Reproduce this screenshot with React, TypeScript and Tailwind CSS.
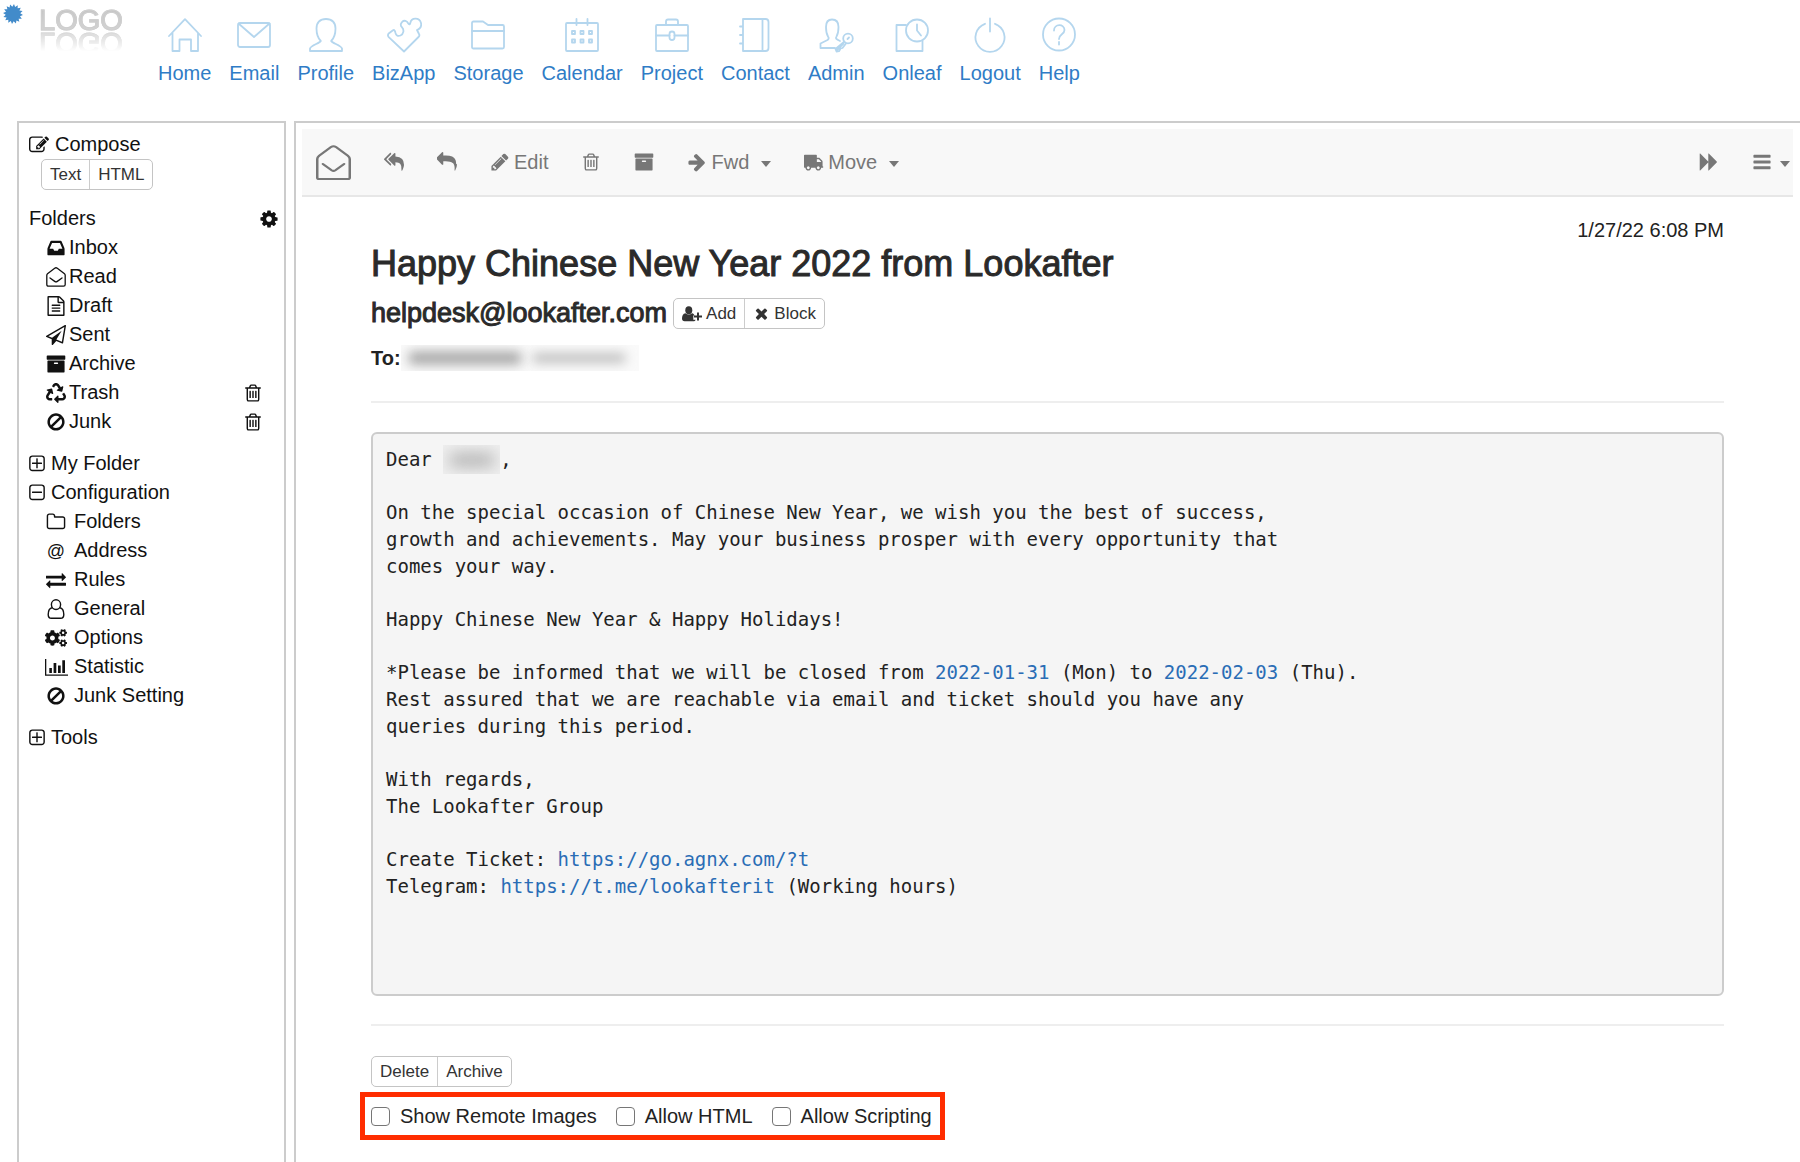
import React from "react";
import { FaCogs, FaRecycle } from "react-icons/fa";

/* ---------- Solid glyphs drawn on a 1792 grid ---------- */

const GLYPHS = {
  archive:
    "M1088 832q0-26-19-45t-45-19h-256q-26 0-45 19t-19 45 19 45 45 19h256q26 0 45-19t19-45zm576-192v960q0 26-19 45t-45 19h-1408q-26 0-45-19t-19-45v-960q0-26 19-45t45-19h1408q26 0 45 19t19 45zm64-448v256q0 26-19 45t-45 19h-1536q-26 0-45-19t-19-45v-256q0-26 19-45t45-19h1536q26 0 45 19t19 45z",
  reply:
    "M1792 1120q0 166-127 451-3 7-10.5 24t-13.5 30-13 22q-12 17-28 17-15 0-23.5-10t-8.5-25q0-9 2.5-26.5t2.5-23.5q5-68 5-123 0-112-19.5-200.5t-54-153.5-89-112-118.5-76.5-147-48.5-170.5-25-193.5-7h-224v256q0 26-19 45t-45 19-45-19l-512-512q-19-19-19-45t19-45l512-512q19-19 45-19t45 19 19 45v256h224q713 0 875 403 53 134 53 333z",
  replyAll:
    "M640 1082v70q0 42-39 59-13 5-25 5-27 0-45-19l-512-512q-19-19-19-45t19-45l512-512q29-31 70-14 39 17 39 59v69l-397 398q-19 19-19 45t19 45zm1152 58q0 58-17 133.5t-38.5 138-48 125-40.5 90.5l-20 40q-8 17-28 17-6 0-9-1-25-8-23-34 43-400-106-565-64-71-170.5-110.5t-267.5-52.5v251q0 42-39 59-13 5-25 5-27 0-45-19l-512-512q-19-19-19-45t19-45l512-512q29-31 70-14 39 17 39 59v262q411 28 599 221 169 173 169 509z",
  cog: "M1152 896q0-106-75-181t-181-75-181 75-75 181 75 181 181 75 181-75 75-181zm512-109v222q0 12-8 23t-20 13l-185 28q-19 54-39 91 35 50 107 138 10 12 10 25t-9 23q-27 37-99 108t-94 71q-12 0-26-9l-138-108q-44 23-91 38-16 136-29 186-7 28-36 28h-222q-14 0-24.5-8.5t-11.5-21.5l-28-184q-49-16-90-37l-141 107q-10 9-25 9-14 0-25-11-126-114-165-168-7-10-7-23 0-12 8-23 15-21 51-66.5t54-70.5q-27-50-41-99l-183-27q-13-2-21-12.5t-8-23.5v-222q0-12 8-23t19-13l186-28q14-46 39-92-40-57-107-138-10-12-10-24 0-10 9-23 26-36 98.5-107.5t94.5-71.5q13 0 26 10l138 107q44-23 91-38 16-136 29-186 7-28 36-28h222q14 0 24.5 8.5t11.5 21.5l28 184q49 16 90 37l142-107q9-9 24-9 13 0 25 10 129 119 165 170 7 8 7 22 0 12-8 23-15 21-51 66.5t-54 70.5q26 50 41 98l183 28q13 2 21 12.5t8 23.5z",
  pencil:
    "M491 1536l91-91-235-235-91 91v107h128v128h107zm523-928q0-22-22-22-10 0-17 7l-542 542q-7 7-7 17 0 22 22 22 10 0 17-7l542-542q7-7 7-17zm-54-192l416 416-832 832h-416v-416zm683 96q0 53-37 90l-166 166-416-416 166-165q36-38 90-38 53 0 91 38l235 234q37 39 37 91z",
  compose:
    "M888 1184l116-116-152-152-116 116v56h96v96h56zm440-720q-16-16-33 1l-350 350q-17 17-1 33t33-1l350-350q17-17 1-33zm80 594v190q0 119-84.5 203.5t-203.5 84.5h-832q-119 0-203.5-84.5t-84.5-203.5v-832q0-119 84.5-203.5t203.5-84.5h832q63 0 117 25 15 7 18 23 3 17-9 29l-49 49q-14 14-32 8-23-6-45-6h-832q-66 0-113 47t-47 113v832q0 66 47 113t113 47h832q66 0 113-47t47-113v-126q0-13 9-22l64-64q15-15 35-7t20 29zm-96-738l288 288-672 672h-288v-288zm444 132l-92 92-288-288 92-92q28-28 68-28t68 28l152 152q28 28 28 68t-28 68z",
  trash:
    "M704 736v576q0 14-9 23t-23 9h-64q-14 0-23-9t-9-23v-576q0-14 9-23t23-9h64q14 0 23 9t9 23zm256 0v576q0 14-9 23t-23 9h-64q-14 0-23-9t-9-23v-576q0-14 9-23t23-9h64q14 0 23 9t9 23zm256 0v576q0 14-9 23t-23 9h-64q-14 0-23-9t-9-23v-576q0-14 9-23t23-9h64q14 0 23 9t9 23zm128 724v-948h-896v948q0 22 7 40.5t14.5 27 10.5 8.5h832q3 0 10.5-8.5t14.5-27 7-40.5zm-672-1076h448l-48-117q-7-9-17-11h-317q-10 2-17 11zm928 32v64q0 14-9 23t-23 9h-96v948q0 83-47 143.5t-113 60.5h-832q-66 0-113-58.5t-47-141.5v-952h-96q-14 0-23-9t-9-23v-64q0-14 9-23t23-9h309l70-167q15-37 54-63t79-26h320q40 0 79 26t54 63l70 167h309q14 0 23 9t9 23z",
  plusSquare:
    "M1344 800v64q0 14-9 23t-23 9h-352v352q0 14-9 23t-23 9h-64q-14 0-23-9t-9-23v-352h-352q-14 0-23-9t-9-23v-64q0-14 9-23t23-9h352v-352q0-14 9-23t23-9h64q14 0 23 9t9 23v352h352q14 0 23 9t9 23zm128 448v-832q0-66-47-113t-113-47h-832q-66 0-113 47t-47 113v832q0 66 47 113t113 47h832q66 0 113-47t47-113zm128-832v832q0 119-84.5 203.5t-203.5 84.5h-832q-119 0-203.5-84.5t-84.5-203.5v-832q0-119 84.5-203.5t203.5-84.5h832q119 0 203.5 84.5t84.5 203.5z",
  minusSquare:
    "M1344 800v64q0 14-9 23t-23 9h-832q-14 0-23-9t-9-23v-64q0-14 9-23t23-9h832q14 0 23 9t9 23zm128 448v-832q0-66-47-113t-113-47h-832q-66 0-113 47t-47 113v832q0 66 47 113t113 47h832q66 0 113-47t47-113zm128-832v832q0 119-84.5 203.5t-203.5 84.5h-832q-119 0-203.5-84.5t-84.5-203.5v-832q0-119 84.5-203.5t203.5-84.5h832q119 0 203.5 84.5t84.5 203.5z",
  ban: "M1440 893q0-161-87-295l-754 753q137 89 297 89 111 0 211.5-43.5t173.5-116.5 116-174.5 43-212.5zm-999 299l755-754q-135-91-300-91-148 0-273 73t-198 199-73 274q0 162 89 299zm1223-299q0 157-61 300t-163.5 246-245 164-298.5 61-298.5-61-245-164-163.5-246-61-300 61-299.5 163.5-245.5 245-164 298.5-61 298.5 61 245 164 163.5 245.5 61 299.5z",
  folder:
    "M1600 1312v-704q0-40-28-68t-68-28h-704q-40 0-68-28t-28-68v-64q0-40-28-68t-68-28h-320q-40 0-68 28t-28 68v960q0 40 28 68t68 28h1216q40 0 68-28t28-68zm128-704v704q0 92-66 158t-158 66h-1216q-92 0-158-66t-66-158v-960q0-92 66-158t158-66h320q92 0 158 66t66 158v32h672q92 0 158 66t66 158z",
  plane:
    "M1764 11q33 24 27 64l-256 1536q-5 29-32 45-14 8-31 8-11 0-24-5l-527-215-298 327q-18 21-47 21-14 0-23-4-19-7-30-23.5t-11-36.5v-452l-472-193q-37-14-40-55-3-39 32-59l1664-960q35-21 68 2zm-342 1499l221-1323-1434 827 336 137 863-639-478 797z",
  inbox:
    "M1151 960h316q-1-3-2.5-8.5t-2.5-8.5l-212-496h-708l-212 496q-1 3-2.5 8.5t-2.5 8.5h316l95 192h320zm513 30v482q0 26-19 45t-45 19h-1408q-26 0-45-19t-19-45v-482q0-62 25-123l238-552q10-25 36.5-42t52.5-17h832q26 0 52.5 17t36.5 42l238 552q25 61 25 123z",
  draft:
    "M1596 380q28 28 48 76t20 88v1152q0 40-28 68t-68 28h-1344q-40 0-68-28t-28-68v-1600q0-40 28-68t68-28h896q40 0 88 20t76 48zm-444-244v376h376q-10-29-22-41l-313-313q-12-12-41-22zm384 1528v-1024h-416q-40 0-68-28t-28-68v-416h-768v1536h1280zm-1024-864q0-14 9-23t23-9h704q14 0 23 9t9 23v64q0 14-9 23t-23 9h-704q-14 0-23-9t-9-23v-64zm736 224q14 0 23 9t9 23v64q0 14-9 23t-23 9h-704q-14 0-23-9t-9-23v-64q0-14 9-23t23-9h704zm0 256q14 0 23 9t9 23v64q0 14-9 23t-23 9h-704q-14 0-23-9t-9-23v-64q0-14 9-23t23-9h704z",
  exchange:
    "M1792 1184v192q0 13-9.5 22.5t-22.5 9.5h-1376v192q0 13-9.5 22.5t-22.5 9.5q-12 0-24-10l-319-320q-9-9-9-22 0-14 9-23l320-320q9-9 23-9 13 0 22.5 9.5t9.5 22.5v192h1376q13 0 22.5 9.5t9.5 22.5zm0-544q0 14-9 23l-320 320q-9 9-23 9-13 0-22.5-9.5t-9.5-22.5v-192h-1376q-13 0-22.5-9.5t-9.5-22.5v-192q0-13 9.5-22.5t22.5-9.5h1376v-192q0-14 9-23t23-9q12 0 24 10l319 319q9 9 9 23z",
  arrowRight:
    "M1600 960q0 54-37 91l-651 651q-39 37-91 37-51 0-90-37l-75-75q-38-38-38-91t38-91l293-293h-704q-52 0-84.5-37.5t-32.5-90.5v-128q0-53 32.5-90.5t84.5-37.5h704l-293-294q-38-36-38-90t38-90l75-75q38-38 90-38 53 0 91 38l651 651q37 35 37 90z",
  times:
    "M1490 1322q0 40-28 68l-136 136q-28 28-68 28t-68-28l-294-294-294 294q-28 28-68 28t-68-28l-136-136q-28-28-28-68t28-68l294-294-294-294q-28-28-28-68t28-68l136-136q28-28 68-28t68 28l294 294 294-294q28-28 68-28t68 28l136 136q28 28 28 68t-28 68l-294 294 294 294q28 28 28 68z",
  truck:
    "M640 1408q0-52-38-90t-90-38-90 38-38 90 38 90 90 38 90-38 38-90zm-384-512h384v-256h-158q-13 0-22 9l-195 195q-9 9-9 22v30zm1280 512q0-52-38-90t-90-38-90 38-38 90 38 90 90 38 90-38 38-90zm256-1088v1024q0 15-4 26.5t-13.5 18.5-16.5 11.5-23.5 6-22.5 2-25.5 0-22.5-.5q0 106-75 181t-181 75-181-75-75-181h-384q0 106-75 181t-181 75-181-75-75-181h-64q-3 0-22.5.5t-25.5 0-22.5-2-23.5-6-16.5-11.5-13.5-18.5-4-26.5q0-26 19-45t45-19v-320q0-8-.5-35t0-38 2.5-34.5 6.5-37 14-30.5 22.5-30l198-198q19-19 50.5-32t58.5-13h160v-192q0-26 19-45t45-19h1024q26 0 45 19t19 45z",
  forward:
    "M109 1651q-19 19-32 13t-13-32v-1472q0-26 13-32t32 13l710 710q8 8 13 19v-710q0-26 13-32t32 13l710 710q19 19 19 45t-19 45l-710 710q-19 19-32 13t-13-32v-710q-5 11-13 19z",
  bars: "M1664 1344v128q0 26-19 45t-45 19h-1408q-26 0-45-19t-19-45v-128q0-26 19-45t45-19h1408q26 0 45 19t19 45zm0-512v128q0 26-19 45t-45 19h-1408q-26 0-45-19t-19-45v-128q0-26 19-45t45-19h1408q26 0 45 19t19 45zm0-512v128q0 26-19 45t-45 19h-1408q-26 0-45-19t-19-45v-128q0-26 19-45t45-19h1408q26 0 45 19t19 45z",
} as const;

type GlyphName = keyof typeof GLYPHS;

function Glyph({ name, className = "size-5" }: { name: GlyphName; className?: string }) {
  return (
    <svg viewBox="0 0 1792 1792" className={className} fill="currentColor" aria-hidden="true">
      <path d={GLYPHS[name]} />
    </svg>
  );
}

function Caret() {
  return (
    <svg viewBox="0 0 10 6" className="mt-1 h-[6px] w-[10px]" fill="currentColor" aria-hidden="true">
      <path d="M0 0h10L5 6z" />
    </svg>
  );
}

function OpenEnvelope({ className }: { className: string }) {
  return (
    <svg viewBox="0 0 28 34" className={className} fill="none" stroke="currentColor" strokeWidth="2" strokeLinejoin="round" aria-hidden="true" preserveAspectRatio="none">
      <path d="M1 13.500C1 12 1.500 11.500 2.500 10.500L12 2q2-1.600 4 0l9.500 8.500c1 1 1.500 1.500 1.500 3V31.500q0 1.500-1.500 1.500h-23Q1 33 1 31.500z" />
      <path d="M5.500 18.500l7 6q1.500 1.200 3 0l7-6" strokeLinecap="round" />
    </svg>
  );
}

function ReadIcon() {
  return (
    <svg viewBox="0 0 20 20" className="size-5" fill="none" stroke="currentColor" strokeWidth="1.300" strokeLinejoin="round" aria-hidden="true">
      <path d="M.8 8.200q0-.9.700-1.500L8.700 1.200q1.300-.9 2.600 0l7.200 5.500q.7.600.7 1.500v9.300q0 1.600-1.600 1.600H2.400Q.8 19.100.8 17.500z" />
      <path d="M4 11l4.700 3.400q1.300.9 2.600 0L16 11" strokeLinecap="round" />
    </svg>
  );
}

function UserOutline() {
  return (
    <svg viewBox="0 0 20 20" className="size-5" fill="none" stroke="currentColor" strokeWidth="1.400" aria-hidden="true">
      <ellipse cx="10" cy="5.600" rx="4.600" ry="4.900" />
      <path d="M6.300 8.800C3.600 9.300 2.200 12 2.200 15.500c0 2.400 1.300 3.800 3.200 3.800h9.200c1.900 0 3.200-1.400 3.200-3.800 0-3.500-1.400-6.200-4.100-6.700" />
    </svg>
  );
}

function BarChart() {
  return (
    <svg viewBox="0 0 23 18" className="h-[18px] w-[23px]" fill="currentColor" aria-hidden="true">
      <path d="M0 1h1.300v15.400H23V17.700H0zM4.300 10h2.600v5H4.300zM8.600 5h2.700v10H8.600zM13 7.500h2.700V15H13zM17.300 2.300H20V15h-2.700z" />
    </svg>
  );
}

function UserPlus() {
  return (
    <svg viewBox="0 0 20 16" className="h-4 w-5" fill="currentColor" aria-hidden="true">
      <ellipse cx="6.800" cy="4.300" rx="3.500" ry="4" />
      <path d="M3.500 7.200C1 7.600 0 9.800 0 12.600 0 14.400 1 15.300 2.600 15.300h8.600c1.200 0 2.100-.5 2.400-1.500h-2.300V9.600h1.300c-.5-1.400-1.300-2.200-2.500-2.400-2 1.800-4.600 1.800-6.600 0z" />
      <path d="M15 6.500h2v3h3v2h-3v3h-2v-3h-3v-2h3z" />
    </svg>
  );
}

function Burst() {
  const spikes = 16;
  const points = Array.from({ length: spikes * 2 }, (_, i) => {
    const r = i % 2 === 0 ? 10 : 7.3;
    const a = (Math.PI * i) / spikes + 0.1;
    return `${(10 + r * Math.cos(a)).toFixed(2)},${(10 + r * Math.sin(a)).toFixed(2)}`;
  }).join(" ");
  return (
    <svg viewBox="0 0 20 20" className="size-5 text-[#428bca]" fill="currentColor" aria-hidden="true">
      <polygon points={points} />
    </svg>
  );
}

/* ---------- Top navigation ---------- */

const NAV: { label: string; art: React.ReactNode }[] = [
  {
    label: "Home",
    art: <path d="M2 19 18 2.200 34 19M5.500 16v18h7V22.500h11.500V34h7V16" />,
  },
  {
    label: "Email",
    art: (
      <>
        <rect x="2" y="6" width="32" height="24" rx="2" />
        <path d="M2.500 6.500 18 20 33.500 6.500" />
      </>
    ),
  },
  {
    label: "Profile",
    art: (
      <path d="M18 2c-6 0-9.500 3.500-9.500 9.500 0 5 1.300 9.500 4.300 12.500-1.300 2.500-9.800 4-10.800 7.500V34h32v-2.500c-1-3.500-9.500-5-10.800-7.500 3-3 4.300-7.500 4.300-12.500C27.500 5.500 24 2 18 2z" />
    ),
  },
  {
    label: "BizApp",
    art: (
      <path d="M7 13.200 3 16.200q-1.800 1.800-.5 3.600L18 34.500 32.500 20q1.500-1.500.5-3L31 13q5-2 4-7c-1.500-5.500-9.500-6-10.700 0-.3 1.500-1 1.800-1.800.8-1.500-3.300-4.500-3.800-6.300-2s-2 4-.2 5.500c2.500 2.500 1.500 7-1.500 8.200-3 1.200-4.500-.5-5-2.500-.3-1.500-1-3.600-2.500-2.800z" />
    ),
  },
  {
    label: "Storage",
    art: (
      <>
        <path d="M2 30V6q0-1.500 1.500-1.500H13l5 3.500h14.500Q34 8 34 9.500V30q0 1.500-1.500 1.500h-29Q2 31.500 2 30z" />
        <path d="M2 14h32" />
      </>
    ),
  },
  {
    label: "Calendar",
    art: (
      <>
        <rect x="2" y="6" width="32" height="28" rx="1" />
        <path d="M12.500 2v6M23.500 2v6" />
        <path d="M8 14h3v3H8zM16.500 14h3v3h-3zM25 14h3v3h-3zM8 22.500h3v3H8zM16.500 22.500h3v3h-3zM25 22.500h3v3h-3z" />
      </>
    ),
  },
  {
    label: "Project",
    art: (
      <>
        <rect x="2" y="8" width="32" height="26" rx="1" />
        <path d="M12 8V4.500Q12 2.500 14 2.500h8q2 0 2 2V8M2 18.500h13.500M20.500 18.500H34" />
        <rect x="15.500" y="14.500" width="5" height="8.500" rx="2.500" />
      </>
    ),
  },
  {
    label: "Contact",
    art: <path d="M6 2h22.500q3 0 3 3v26q0 3-3 3H6zM25.500 2v32M3 9.500h3M3 18h3M3 26.500h3" />,
  },
  {
    label: "Admin",
    art: (
      <>
        <path d="M17 31H2.500v-4.500L9.500 23q2-1.500.5-3.500C8.500 17 8 14 8 10c0-5 2-7.500 6-7.500S20.500 5 20.500 10c0 4-.5 7-2 9.500-1.500 2 0 3 3.500 4.500" />
        <circle cx="30" cy="21.500" r="4.800" />
        <path d="M26.500 24.500 17.500 32l1 2.500 2.500-.3 1.500-2.700 2-.5L28 26.500M29.500 22l1.500-1.500M19.500 32.500l6-6" />
      </>
    ),
  },
  {
    label: "Onleaf",
    art: (
      <>
        <path d="M12 8H2.500v26h26v-10" />
        <circle cx="23" cy="13.500" r="11" />
        <path d="M23 7.500v6l4 5" />
      </>
    ),
  },
  {
    label: "Logout",
    art: <path d="M13 6.800a14.500 14.500 0 1 0 10 0M18 1.500V14.500" />,
  },
  {
    label: "Help",
    art: (
      <>
        <circle cx="18" cy="17.500" r="16" />
        <path d="M13 13.500c0-7 10.500-7 10.500-.5 0 4.500-5.500 4-5.500 9M18 25v2.500" />
      </>
    ),
  },
];

function TopBar() {
  return (
    <header className="flex h-[121px] shrink-0 items-start">
      <div className="flex w-[158px] shrink-0 items-start gap-4 pl-[3px] pt-1">
        <Burst />
        <div className="mt-[2px] bg-linear-to-b from-[#c4c4c4] to-[#d6d6d6] bg-clip-text text-[29px] leading-[29px] text-transparent [-webkit-box-reflect:below_-7px_linear-gradient(transparent_20%,rgba(0,0,0,1))] [-webkit-text-stroke:1px_#cfcfcf]">
          LOGO
        </div>
      </div>
      <nav aria-label="Main" className="flex gap-[18px] pt-[17px]">
        {NAV.map((item) => (
          <a key={item.label} href="#" className="flex flex-col items-center gap-[5px] text-xl leading-[30px] text-[#2f7cc6]">
            <svg
              viewBox="0 0 36 36"
              className="size-9 text-[#b4d6ee]"
              fill="none"
              stroke="currentColor"
              strokeWidth="1.800"
              strokeLinejoin="round"
              strokeLinecap="round"
              aria-hidden="true"
            >
              {item.art}
            </svg>
            {item.label}
          </a>
        ))}
      </nav>
    </header>
  );
}

/* ---------- Shared controls ---------- */

function ButtonGroup({ children }: { children: React.ReactNode }) {
  return <div className="flex w-fit divide-x divide-[#ccc] rounded-[5px] border border-[#c4c4c4] bg-white">{children}</div>;
}

function SmallButton({ children }: { children: React.ReactNode }) {
  return (
    <button type="button" className="flex h-[29px] items-center gap-1 px-2 text-[17px] leading-6 text-[#333]">
      {children}
    </button>
  );
}

/* ---------- Sidebar ---------- */

function FolderRow({ icon, label, wide, trash }: { icon: React.ReactNode; label: string; wide?: boolean; trash?: boolean }) {
  return (
    <li className="flex h-[29px] items-center pl-[14px] pr-4">
      <a href="#" className={wide ? "flex items-center gap-[5px]" : "flex items-center"}>
        <span className="flex w-[26px] justify-center">{icon}</span>
        {label}
      </a>
      {trash && (
        <button type="button" aria-label={`Empty ${label}`} className="ml-auto">
          <Glyph name="trash" />
        </button>
      )}
    </li>
  );
}

function Sidebar() {
  return (
    <aside className="w-[269px] shrink-0 border-x-2 border-t-2 border-[#ccc] pl-[10px] pr-[5px] pt-[7px] text-xl leading-[29px] text-[#111]">
      <a href="#" className="flex h-[29px] items-center gap-[6px]">
        <Glyph name="compose" />
        Compose
      </a>
      <div className="pl-3">
        <ButtonGroup>
          <SmallButton>Text</SmallButton>
          <SmallButton>HTML</SmallButton>
        </ButtonGroup>
      </div>
      <div className="mt-[14px] flex h-[29px] items-center justify-between">
        <h2>Folders</h2>
        <button type="button" aria-label="Folder settings">
          <Glyph name="cog" />
        </button>
      </div>
      <ul>
        <FolderRow icon={<Glyph name="inbox" />} label="Inbox" />
        <FolderRow icon={<ReadIcon />} label="Read" />
        <FolderRow icon={<Glyph name="draft" />} label="Draft" />
        <FolderRow icon={<Glyph name="plane" />} label="Sent" />
        <FolderRow icon={<Glyph name="archive" />} label="Archive" />
        <FolderRow icon={<FaRecycle className="size-5" aria-hidden="true" />} label="Trash" trash />
        <FolderRow icon={<Glyph name="ban" />} label="Junk" trash />
      </ul>
      <a href="#" className="mt-[13px] flex h-[29px] items-center">
        <Glyph name="plusSquare" className="-ml-[2px] mr-1 size-5" />
        My Folder
      </a>
      <a href="#" className="flex h-[29px] items-center">
        <Glyph name="minusSquare" className="-ml-[2px] mr-1 size-5" />
        Configuration
      </a>
      <ul>
        <FolderRow wide icon={<Glyph name="folder" />} label="Folders" />
        <FolderRow wide icon={<span className="text-lg">@</span>} label="Address" />
        <FolderRow wide icon={<Glyph name="exchange" />} label="Rules" />
        <FolderRow wide icon={<UserOutline />} label="General" />
        <FolderRow wide icon={<FaCogs className="h-5 w-[22px]" aria-hidden="true" />} label="Options" />
        <FolderRow wide icon={<BarChart />} label="Statistic" />
        <FolderRow wide icon={<Glyph name="ban" />} label="Junk Setting" />
      </ul>
      <a href="#" className="mt-[13px] flex h-[29px] items-center">
        <Glyph name="plusSquare" className="-ml-[2px] mr-1 size-5" />
        Tools
      </a>
    </aside>
  );
}

/* ---------- Message pane ---------- */

function Toolbar() {
  return (
    <div className="flex h-[68px] items-center border-b-2 border-[#e7e7e7] bg-[#f8f8f8] pl-[14px] pr-[3px] text-xl leading-7 text-[#777]">
      <div className="flex items-center gap-[33px]">
        <button type="button" aria-label="Mark as read">
          <OpenEnvelope className="h-[35px] w-[35px]" />
        </button>
        <button type="button" aria-label="Reply to all">
          <Glyph name="replyAll" />
        </button>
        <button type="button" aria-label="Reply">
          <Glyph name="reply" />
        </button>
        <button type="button" className="flex items-center gap-1">
          <Glyph name="pencil" />
          Edit
        </button>
        <button type="button" aria-label="Delete message">
          <Glyph name="trash" />
        </button>
        <button type="button" aria-label="Archive message">
          <Glyph name="archive" />
        </button>
        <button type="button" className="flex items-center gap-1">
          <Glyph name="arrowRight" />
          <span className="mr-2">Fwd</span>
          <Caret />
        </button>
        <button type="button" className="flex items-center gap-1">
          <Glyph name="truck" className="size-5 -scale-x-100" />
          <span className="mr-2">Move</span>
          <Caret />
        </button>
      </div>
      <div className="ml-auto flex items-center gap-[33px]">
        <button type="button" aria-label="Next message">
          <Glyph name="forward" />
        </button>
        <button type="button" aria-label="Menu" className="flex items-center gap-2">
          <Glyph name="bars" />
          <Caret />
        </button>
      </div>
    </div>
  );
}

function MailLink({ children }: { children: string }) {
  return (
    <a href="#" className="text-[#2a6db5]">
      {children}
    </a>
  );
}

function Option({ label }: { label: string }) {
  return (
    <label className="flex items-center gap-[10px]">
      <input type="checkbox" className="size-[19px] appearance-none rounded-[4px] border border-[#767676] bg-white checked:bg-[#428bca]" />
      {label}
    </label>
  );
}

function Message() {
  return (
    <article className="px-[69px] pt-[19px] text-xl leading-7 text-[#222]">
      <time className="block text-right">1/27/22 6:08 PM</time>
      <h1 className="text-4xl leading-10 text-[#2a2a2a] [-webkit-text-stroke:1px]">Happy Chinese New Year 2022 from Lookafter</h1>
      <div className="mt-[14px] flex items-center gap-[6px]">
        <h2 className="text-[27px] leading-[31px] text-[#2a2a2a] [-webkit-text-stroke:1px]">helpdesk@lookafter.com</h2>
        <ButtonGroup>
          <SmallButton>
            <UserPlus />
            Add
          </SmallButton>
          <SmallButton>
            <Glyph name="times" className="size-[17px]" />
            Block
          </SmallButton>
        </ButtonGroup>
      </div>
      <div className="mt-[15px] flex h-7 items-center">
        <strong>To:</strong>
        <span className="flex h-[26px] w-[238px] items-center overflow-hidden bg-[#fafafa]" role="img" aria-label="Hidden recipient">
          <span className="ml-2 h-3 w-[112px] bg-[#a0a0a0] blur-[6px]" />
          <span className="ml-3 h-2 w-[92px] bg-[#b0b0b0] blur-[6px]" />
        </span>
      </div>
      <hr className="mt-[29px] border-t-2 border-[#eee]" />

      <div className="mt-[29px] flex flex-col gap-[26px] rounded-[6px] border-2 border-[#ccc] bg-[#f5f5f5] px-[13px] pb-[94px] pt-3 font-['DejaVu_Sans_Mono',monospace] text-[19px] leading-[27px]">
        <p className="flex h-[27px] items-center">
          <span className="whitespace-pre">Dear </span>
          <span className="flex h-[29px] w-[57px] items-center justify-center overflow-hidden bg-[#efefef]" role="img" aria-label="Hidden name">
            <span className="h-3 w-11 bg-[#aaa] blur-[8px]" />
          </span>
          ,
        </p>
        <p>
          On the special occasion of Chinese New Year, we wish you the best of success,
          <br />
          growth and achievements. May your business prosper with every opportunity that
          <br />
          comes your way.
        </p>
        <p>Happy Chinese New Year &amp; Happy Holidays!</p>
        <p>
          *Please be informed that we will be closed from <MailLink>2022-01-31</MailLink> (Mon) to <MailLink>2022-02-03</MailLink> (Thu).
          <br />
          Rest assured that we are reachable via email and ticket should you have any
          <br />
          queries during this period.
        </p>
        <p>
          With regards,
          <br />
          The Lookafter Group
        </p>
        <p>
          Create Ticket: <MailLink>https://go.agnx.com/?t</MailLink>
          <br />
          Telegram: <MailLink>https://t.me/lookafterit</MailLink> (Working hours)
        </p>
      </div>

      <hr className="mt-7 border-t-2 border-[#eee]" />

      <div className="mt-[30px]">
        <ButtonGroup>
          <SmallButton>Delete</SmallButton>
          <SmallButton>Archive</SmallButton>
        </ButtonGroup>
      </div>
      <div className="-ml-[11px] mt-[5px] flex h-[48px] w-fit items-center gap-[19px] border-[5px] border-[#ff2d00] pl-[6px] pr-2">
        <Option label="Show Remote Images" />
        <Option label="Allow HTML" />
        <Option label="Allow Scripting" />
      </div>
    </article>
  );
}

export default function App() {
  return (
    <div className="flex min-h-screen flex-col overflow-x-hidden bg-white font-['Liberation_Sans',Arial,sans-serif] text-[#222]">
      <TopBar />
      <div className="flex flex-1 gap-2 pl-[17px]">
        <Sidebar />
        <main className="min-w-0 flex-1 border-l-2 border-t-2 border-[#ccc] pl-[6px] pr-[7px] pt-[6px]">
          <Toolbar />
          <Message />
        </main>
      </div>
    </div>
  );
}
